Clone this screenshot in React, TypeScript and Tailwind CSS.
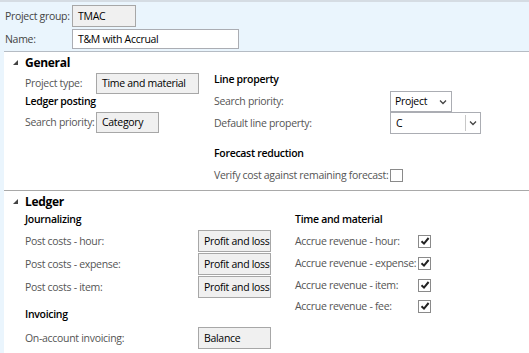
import React from "react";

const Tri = () => (
  <svg width="7" height="7" viewBox="0 0 7 7" className="shrink-0">
    <polygon points="6,1 6,6 1,6" fill="#444" />
  </svg>
);

const Check = ({ checked }: { checked: boolean }) => (
  <div className="w-[13px] h-[13px] border border-[#8a8a8a] bg-white flex items-center justify-center">
    {checked && (
      <svg width="10" height="10" viewBox="0 0 10 10">
        <path d="M1.5 5.2 L4 7.6 L8.6 2" stroke="#222" strokeWidth="2" fill="none" />
      </svg>
    )}
  </div>
);

const Chevron = () => (
  <svg width="8" height="6" viewBox="0 0 8 6">
    <path d="M1 1.5 L4 4.5 L7 1.5" stroke="#444" strokeWidth="1.3" fill="none" />
  </svg>
);

const Box = ({ w, h, children, white }: { w: string; h: string; children: React.ReactNode; white?: boolean }) => (
  <div
    className={`${w} ${h} border flex items-center px-[5px] text-black whitespace-nowrap ${
      white ? "bg-white border-[#abadb3]" : "bg-[#f0f0f0] border-[#a7a7a7]"
    }`}
  >
    {children}
  </div>
);

const H = ({ children, className = "" }: { children: React.ReactNode; className?: string }) => (
  <div className={`h-[16px] flex items-center font-semibold text-black ${className}`}>{children}</div>
);

export default function App() {
  return (
    <div
      className="w-[529px] h-[353px] overflow-hidden bg-[#eaf5fd] text-[10.5px] tracking-[-0.3px] leading-none text-[#555] whitespace-nowrap"
      style={{ fontFamily: '"Open Sans", "Noto Sans", sans-serif' }}
    >
      <div className="h-[2px] bg-[#d5dce3]" />
      {/* header */}
      <div className="pl-[5px] pt-[3px] h-[49px]">
        <div className="flex items-center h-[22px]">
          <div className="w-[67px] text-[#444]">Project group:</div>
          <Box w="w-[64px]" h="h-[22px]">TMAC</Box>
        </div>
        <div className="flex items-center h-[20px] mt-[2px]">
          <div className="w-[67px] text-[#444]">Name:</div>
          <Box w="w-[167px]" h="h-[20px]" white>T&amp;M with Accrual</Box>
        </div>
      </div>
      {/* panel */}
      <div className="ml-[4px] bg-white border-t border-[#b5bcc4] h-[302px]">
        {/* General */}
        <div className="flex items-center h-[17px] pl-[8px] mt-[2px]">
          <Tri />
          <span className="ml-[6px] font-bold text-[12px] text-black">General</span>
        </div>
        <div className="flex pl-[21px]">
          <div className="w-[189px]">
            <div className="flex items-center h-[21px] mt-[2px]">
              <div className="w-[71px]">Project type:</div>
              <Box w="w-[103px]" h="h-[21px]">Time and material</Box>
            </div>
            <H className="h-[18px] mt-[-2px]">Ledger posting</H>
            <div className="flex items-center h-[21px] mt-[2px]">
              <div className="w-[71px]">Search priority:</div>
              <Box w="w-[63px]" h="h-[21px]">Category</Box>
            </div>
          </div>
          <div>
            <H>Line property</H>
            <div className="flex items-center h-[21px] mt-[4px]">
              <div className="w-[176px]">Search priority:</div>
              <div className="w-[62px] h-[21px] border border-[#abadb3] flex items-center justify-between px-[4px] text-black">
                <span>Project</span>
                <Chevron />
              </div>
            </div>
            <div className="flex items-center h-[22px]">
              <div className="w-[176px]">Default line property:</div>
              <div className="w-[91px] h-[22px] border border-[#abadb3] flex items-center text-black">
                <span className="flex-1 pl-[5px]">C</span>
                <div className="w-px h-[16px] bg-[#c8c8c8]" />
                <div className="w-[14px] flex justify-center">
                  <Chevron />
                </div>
              </div>
            </div>
            <H className="mt-[11px]">Forecast reduction</H>
            <div className="flex items-center h-[16px] mt-[6px]">
              <span>Verify cost against remaining forecast:</span>
              <div className="ml-[2px]">
                <Check checked={false} />
              </div>
            </div>
          </div>
        </div>
        {/* separator */}
        <div className="border-t border-[#a9a9a9] mt-[7px]" />
        {/* Ledger */}
        <div className="flex items-center h-[17px] pl-[8px] mt-[2px]">
          <Tri />
          <span className="ml-[6px] font-bold text-[12px] text-black">Ledger</span>
        </div>
        <div className="flex pl-[21px]">
          <div className="w-[270px]">
            <H className="h-[17px] mt-[1px]">Journalizing</H>
            <div className="flex flex-col gap-[1px] mt-[2px]">
              {["Post costs - hour:", "Post costs - expense:", "Post costs - item:"].map((l) => (
                <div key={l} className="flex items-center h-[22px]">
                  <div className="w-[173px]">{l}</div>
                  <Box w="w-[73px]" h="h-[22px]">Profit and loss</Box>
                </div>
              ))}
            </div>
            <H className="h-[17px] mt-[8px]">Invoicing</H>
            <div className="flex items-center h-[22px] mt-[4px]">
              <div className="w-[173px]">On-account invoicing:</div>
              <Box w="w-[73px]" h="h-[22px]">Balance</Box>
            </div>
          </div>
          <div>
            <H className="h-[17px] mt-[1px]">Time and material</H>
            {["Accrue revenue - hour:", "Accrue revenue - expense:", "Accrue revenue - item:", "Accrue revenue - fee:"].map(
              (l, i) => (
                <div key={l} className={`flex items-center ${i === 3 ? "h-[20px]" : "h-[22px]"} ${i === 0 ? "mt-[2px]" : ""}`}>
                  <div className="w-[123px]">{l}</div>
                  <Check checked />
                </div>
              )
            )}
          </div>
        </div>
      </div>
    </div>
  );
}
